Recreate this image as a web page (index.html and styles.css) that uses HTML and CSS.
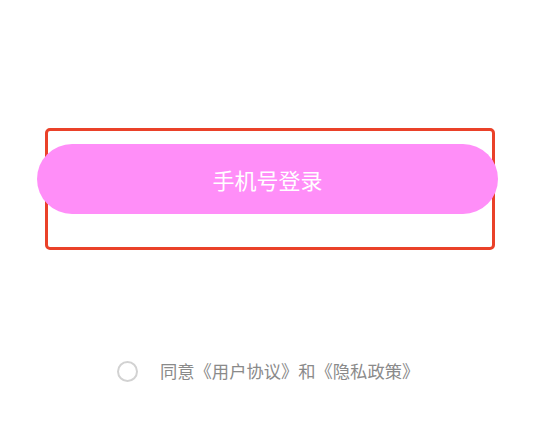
FILE: index.html
```html
<!DOCTYPE html>
<html lang="zh">
<head>
<meta charset="utf-8">
<link rel="stylesheet" href="styles.css">
</head>
<body>
<div class="page">
  <div class="login-box">
    <div class="login-btn">手机号登录</div>
  </div>
  <div class="agree">
    <span class="radio"></span>
    <span class="agree-text">同意《用户协议》和《隐私政策》</span>
  </div>
</div>
</body>
</html>
```
FILE: styles.css
```css
* { box-sizing: border-box; }
html, body {
  margin: 0;
  padding: 0;
  background: #ffffff;
  font-family: "Noto Sans CJK SC", "Noto Sans", sans-serif;
}
.page {
  width: 535px;
  height: 427px;
  padding-top: 128px;
  overflow: hidden;
}
.login-box {
  margin-left: 45px;
  width: 450px;
  height: 122px;
  border: 3px solid #ea4129;
  border-radius: 5px;
  padding-top: 13px;
}
.login-btn {
  margin-left: -11px;
  width: 461px;
  height: 70px;
  border-radius: 35px;
  background: #ff8ef8;
  color: #ffffff;
  font-size: 22px;
  line-height: 70px;
  text-align: center;
}
.agree {
  margin-top: 111px;
  margin-left: 117px;
  display: flex;
  align-items: center;
  gap: 22px;
  height: 20px;
}
.radio {
  width: 21px;
  height: 21px;
  border: 2px solid #d2d2d2;
  border-radius: 50%;
  flex: none;
}
.agree-text {
  font-size: 17.3px;
  color: #8a8a8a;
  line-height: 20px;
  white-space: nowrap;
}
```
